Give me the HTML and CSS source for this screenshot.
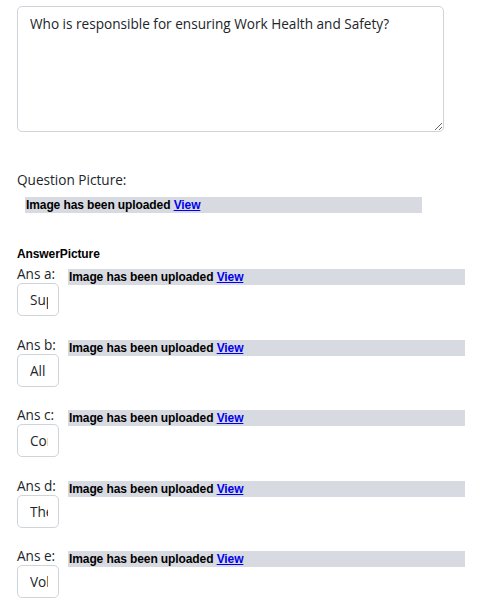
FILE: index.html
```html
<!DOCTYPE html>
<html>
<head>
<meta charset="utf-8">
<link rel="stylesheet" href="styles.css">
</head>
<body>
<div class="page">
  <textarea class="question">Who is responsible for ensuring Work Health and Safety?</textarea>
  <div class="qp-label">Question Picture:</div>
  <div class="upload upload-q">Image has been uploaded <a href="#">View</a></div>
  <div class="ap-title">AnswerPicture</div>
  <div class="answers">
    <div class="ans-row">
      <div class="ans-left"><span class="ans-label">Ans a:</span><input class="ans-input" value="Supervisors"></div>
      <div class="upload upload-a">Image has been uploaded <a href="#">View</a></div>
    </div>
    <div class="ans-row">
      <div class="ans-left"><span class="ans-label">Ans b:</span><input class="ans-input" value="All workers"></div>
      <div class="upload upload-a">Image has been uploaded <a href="#">View</a></div>
    </div>
    <div class="ans-row">
      <div class="ans-left"><span class="ans-label">Ans c:</span><input class="ans-input" value="Contractors"></div>
      <div class="upload upload-a">Image has been uploaded <a href="#">View</a></div>
    </div>
    <div class="ans-row">
      <div class="ans-left"><span class="ans-label">Ans d:</span><input class="ans-input" value="The employer"></div>
      <div class="upload upload-a">Image has been uploaded <a href="#">View</a></div>
    </div>
    <div class="ans-row">
      <div class="ans-left"><span class="ans-label">Ans e:</span><input class="ans-input" value="Volunteers"></div>
      <div class="upload upload-a">Image has been uploaded <a href="#">View</a></div>
    </div>
  </div>
</div>
</body>
</html>
```
FILE: styles.css
```css
html, body {
  margin: 0;
  padding: 0;
  background: #fff;
}
.page {
  padding: 6px 0 0 17px;
  font-family: "Open Sans", "Noto Sans", sans-serif;
  color: #212529;
}
.question {
  display: block;
  box-sizing: border-box;
  width: 427px;
  height: 126px;
  margin: 0;
  padding: 6px 12px;
  border: 1px solid #ced4da;
  border-radius: 5px;
  font-family: "Open Sans", "Noto Sans", sans-serif;
  font-size: 13.6px;
  line-height: 22px;
  color: #212529;
  resize: vertical;
}
.qp-label {
  margin-top: 38px;
  font-size: 13.6px;
  line-height: 20px;
}
.upload {
  box-sizing: border-box;
  background: #d8dae1;
  height: 16px;
  font-family: "Liberation Sans", Arial, sans-serif;
  font-weight: bold;
  font-size: 12px;
  letter-spacing: -0.1px;
  line-height: 16px;
  color: #000;
  padding-left: 1px;
  white-space: nowrap;
}
.upload a {
  color: #0000ee;
  text-decoration: underline;
}
.upload-q {
  width: 397px;
  margin: 7px 0 0 8px;
}
.ap-title {
  margin-top: 33px;
  font-family: "Liberation Sans", Arial, sans-serif;
  font-weight: bold;
  font-size: 12px;
  letter-spacing: -0.1px;
  line-height: 16px;
  color: #000;
}
.answers {
  display: flex;
  flex-direction: column;
  gap: 19.5px;
  margin-top: 3px;
}
.ans-row {
  display: flex;
}
.ans-left {
  display: flex;
  flex-direction: column;
  width: 51px;
}
.ans-label {
  font-size: 13.6px;
  line-height: 18px;
}
.ans-input {
  box-sizing: border-box;
  width: 42px;
  height: 33px;
  margin: 0;
  padding: 6px 10px 6px 12px;
  border: 1px solid #ced4da;
  border-radius: 5px;
  font-family: "Open Sans", "Noto Sans", sans-serif;
  font-size: 13.6px;
  color: #212529;
  background: #fff;
}
.upload-a {
  width: 397px;
  margin-top: 4px;
}
```
